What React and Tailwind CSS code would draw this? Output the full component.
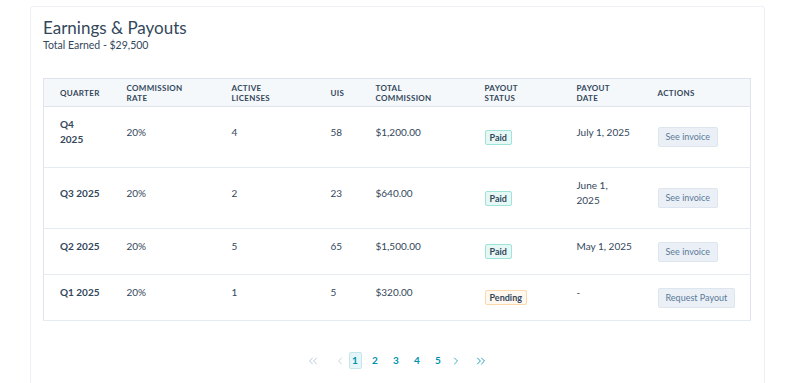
import { ChevronLeft, ChevronRight, ChevronsLeft, ChevronsRight } from 'lucide-react';

const ROWS = [
  { quarter: ['Q4', '2025'], rate: '20%', licenses: '4', uis: '58', total: '$1,200.00', status: 'Paid', date: ['July 1, 2025'], action: 'See invoice' },
  { quarter: ['Q3 2025'], rate: '20%', licenses: '2', uis: '23', total: '$640.00', status: 'Paid', date: ['June 1,', '2025'], action: 'See invoice' },
  { quarter: ['Q2 2025'], rate: '20%', licenses: '5', uis: '65', total: '$1,500.00', status: 'Paid', date: ['May 1, 2025'], action: 'See invoice' },
  { quarter: ['Q1 2025'], rate: '20%', licenses: '1', uis: '5', total: '$320.00', status: 'Pending', date: ['-'], action: 'Request Payout' },
];

function Text({ lines, bold }) {
  return (
    <div className={`mb-[10px] leading-[15px] whitespace-nowrap ${bold ? 'font-bold' : ''}`}>
      {lines.map((l, i) => <div key={i}>{l}</div>)}
    </div>
  );
}

function Badge({ status }) {
  const paid = status === 'Paid';
  return (
    <span
      className={`inline-block px-[4px] h-[15px] leading-[13px] text-[9px] font-bold border rounded-[2px] text-[#33475b] ${
        paid ? 'bg-[#e5f8f6] border-[#9fe4da]' : 'bg-[#fef8f0] border-[#fbd9ac]'
      }`}
    >
      {status}
    </span>
  );
}

export default function App() {
  const td = 'px-4 py-[10px] align-middle border-b border-[#e6ebf1]';
  return (
    <div className="w-[800px] h-[383px] bg-white overflow-hidden text-[#33475b]" style={{ fontFamily: 'Lato, "Noto Sans", sans-serif' }}>
      <div className="ml-[30px] mt-[6px] w-[735px] h-[400px] border border-[#edf0f4] rounded-[3px] pl-[12px] pr-[14px] pt-[11px]">
        <h1 className="text-[17px] leading-[20px] font-normal">Earnings &amp; Payouts</h1>
        <p className="text-[10.5px] leading-[14px]">Total Earned - $29,500</p>

        <table className="mt-[26px] w-[707px] table-fixed border-collapse border border-[#dfe3eb] text-[10px]">
          <colgroup>
            <col className="w-[67px]" />
            <col className="w-[105px]" />
            <col className="w-[99px]" />
            <col className="w-[45px]" />
            <col className="w-[109px]" />
            <col className="w-[92px]" />
            <col className="w-[81px]" />
            <col className="w-[109px]" />
          </colgroup>
          <thead>
            <tr className="bg-[#f5f8fa] h-[28px]">
              {[['QUARTER'], ['COMMISSION', 'RATE'], ['ACTIVE', 'LICENSES'], ['UIS'], ['TOTAL', 'COMMISSION'], ['PAYOUT', 'STATUS'], ['PAYOUT', 'DATE'], ['ACTIONS']].map((h, i) => (
                <th key={i} className="px-4 py-0 text-left align-middle text-[8px] font-bold leading-[10px] tracking-[0.04em] border-b border-[#dfe3eb] whitespace-nowrap">
                  {h.map((l, j) => <div key={j}>{l}</div>)}
                </th>
              ))}
            </tr>
          </thead>
          <tbody>
            {ROWS.map((r, i) => (
              <tr key={i}>
                <td className={td}><Text lines={r.quarter} bold /></td>
                <td className={td}><Text lines={[r.rate]} /></td>
                <td className={td}><Text lines={[r.licenses]} /></td>
                <td className={td}><Text lines={[r.uis]} /></td>
                <td className={td}><Text lines={[r.total]} /></td>
                <td className={td}><Badge status={r.status} /></td>
                <td className={td}><Text lines={r.date} /></td>
                <td className={td}>
                  <button className="h-[20px] px-[7px] text-[9px] text-[#5c7a99] bg-[#eaf0f6] border border-[#dde5ee] rounded-[2px] whitespace-nowrap">
                    {r.action}
                  </button>
                </td>
              </tr>
            ))}
          </tbody>
        </table>

        <div className="mt-[31px] flex items-center justify-center text-[10px] font-bold text-[#0091ae]">
          <ChevronsLeft className="w-[14px] h-[14px] text-[#b0c1d4] mr-[14px]" strokeWidth={1.5} />
          <ChevronLeft className="w-[12px] h-[12px] text-[#b0c1d4] mr-[3px]" strokeWidth={1.5} />
          <span className="w-[13px] h-[17px] flex items-center justify-center bg-[#e5f5f8] border border-[#c4e5ec] rounded-[2px]">1</span>
          <span className="ml-[3px] w-[21px] text-center">2</span>
          <span className="w-[21px] text-center">3</span>
          <span className="w-[21px] text-center">4</span>
          <span className="w-[21px] text-center">5</span>
          <ChevronRight className="ml-[1px] w-[12px] h-[12px] mr-[12px]" strokeWidth={1.5} />
          <ChevronsRight className="w-[14px] h-[14px]" strokeWidth={1.5} />
        </div>
      </div>
    </div>
  );
}
